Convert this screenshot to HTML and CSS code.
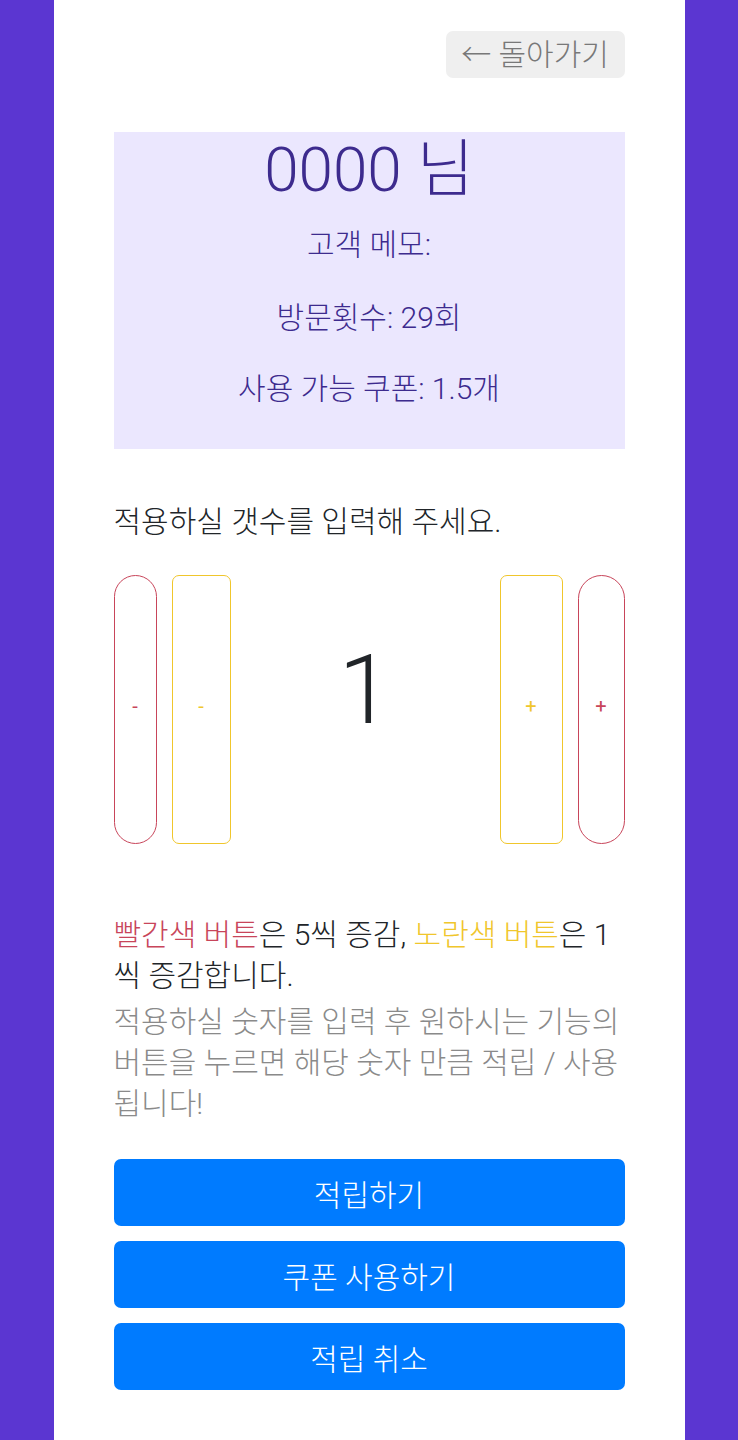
FILE: index.html
```html
<!DOCTYPE html>
<html lang="ko">
<head>
<meta charset="utf-8">
<title>적립</title>
<link rel="stylesheet" href="styles.css">
</head>
<body>
<main class="page">
  <div class="top-row">
    <button class="back-btn">← 돌아가기</button>
  </div>
  <section class="info">
    <h1 class="info-name">0000 님</h1>
    <p class="info-line">고객 메모:</p>
    <p class="info-line">방문횟수: 29회</p>
    <p class="info-line">사용 가능 쿠폰: 1.5개</p>
  </section>
  <p class="prompt">적용하실 갯수를 입력해 주세요.</p>
  <div class="counter">
    <button class="step step-red step-red-left">-</button>
    <button class="step step-yellow step-yellow-left">-</button>
    <div class="count">1</div>
    <button class="step step-yellow step-yellow-right">+</button>
    <button class="step step-red step-red-right">+</button>
  </div>
  <p class="desc"><span class="red">빨간색 버튼</span>은 5씩 증감, <span class="yellow">노란색 버튼</span>은 1<wbr>씩 증감합니다.</p>
  <p class="note">적용하실 숫자를 입력 후 원하시는 기능의 버튼을 누르면 해당 숫자 만큼 적립 / 사용 됩니다!</p>
  <div class="actions">
    <button class="action">적립하기</button>
    <button class="action">쿠폰 사용하기</button>
    <button class="action">적립 취소</button>
  </div>
</main>
</body>
</html>
```

FILE: styles.css
```css
html, body {
  margin: 0;
  padding: 0;
}
body {
  background: #5b36d1;
  font-family: "Roboto", "Noto Sans CJK KR", sans-serif;
  font-weight: 300;
  color: #212529;
}
.page {
  min-height: 1440px;
  box-sizing: border-box;
  margin: 0 auto;
  padding: 31px 60px 0 60px;
  width: 631px;
  background: #ffffff;
  word-break: keep-all;
}
.top-row {
  display: flex;
  justify-content: flex-end;
}
.back-btn {
  font-family: inherit;
  font-weight: 300;
  font-size: 30px;
  color: #787878;
  background: #efefef;
  border: none;
  border-radius: 7px;
  height: 47px;
  width: 179px;
  padding: 0;
  line-height: 47px;
}
.info {
  margin-top: 54px;
  background: #ebe7fe;
  padding: 0 0 39px;
  text-align: center;
  color: #3d2b8e;
}
.info-name {
  margin: 0;
  font-weight: 300;
  font-size: 62px;
  line-height: 76px;
}
.info-line {
  margin: 31px 0 0;
  font-size: 30px;
  line-height: 42px;
}
.info-name + .info-line {
  margin-top: 16px;
}
.info-line:last-child {
  margin-top: 29px;
}
.prompt {
  margin: 52px 0 0;
  font-size: 30px;
  line-height: 41px;
  color: #212529;
}
.counter {
  margin-top: 33px;
  height: 269px;
  display: flex;
  align-items: stretch;
}
.step {
  font-family: inherit;
  font-weight: 400;
  background: #fff;
  padding: 0 0 8px;
  font-size: 20px;
  box-sizing: border-box;
}
.step-red {
  border: 1.5px solid #c8455a;
  color: #c8455a;
  border-radius: 24px;
}
.step-yellow {
  border: 1.5px solid #f0c62c;
  color: #f0c62c;
  border-radius: 7px;
}
.step-red-left { width: 43px; margin-right: 15px; }
.step-yellow-left { width: 59px; }
.step-yellow-right { width: 63px; margin-right: 15px; }
.step-red-right { width: 47px; }
.count {
  flex: 1;
  display: flex;
  align-items: center;
  justify-content: center;
  font-size: 96px;
  font-weight: 300;
  color: #212529;
  padding-bottom: 40px;
}
.desc {
  margin: 70px 0 0;
  font-size: 30px;
  line-height: 41px;
  color: #212529;
}
.red { color: #c8455a; }
.yellow { color: #f0c62c; }
.note {
  margin: 5px 0 0;
  font-size: 30px;
  line-height: 41px;
  color: #8a8a8a;
}
.actions {
  margin-top: 35px;
  display: flex;
  flex-direction: column;
  gap: 15px;
}
.action {
  font-family: inherit;
  font-weight: 300;
  font-size: 30px;
  color: #fff;
  background: #007bff;
  border: none;
  border-radius: 7px;
  height: 67px;
  padding: 0;
}
```
